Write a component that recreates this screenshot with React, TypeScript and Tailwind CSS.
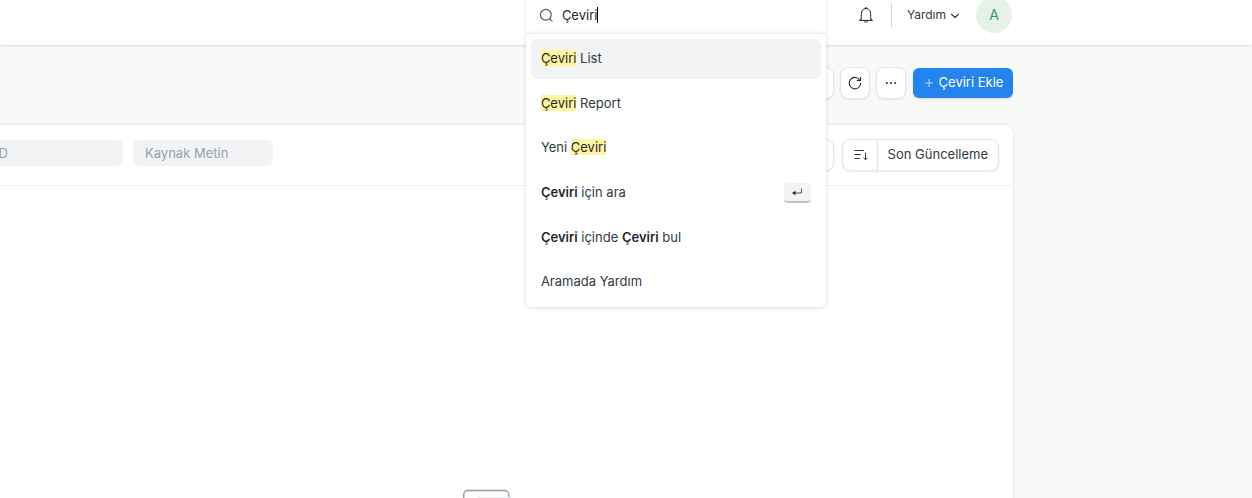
import React, { useState } from "react";

const FONT = "font-['Inter','Liberation_Sans',sans-serif]";
const BUTTON =
  "flex h-8 items-center justify-center border border-[#e3e6e8] bg-white shadow-[0_1px_2px_rgba(25,39,52,0.08)]";

function Mark({ children }: { children: React.ReactNode }) {
  return <mark className="bg-[#fff59d] text-[#1f272e]">{children}</mark>;
}

function ReturnKey() {
  return (
    <kbd className="flex h-5 w-[27px] items-center justify-center rounded-[4px] border-b-2 border-[#c0c6cc] bg-[#f1f3f5]">
      <svg width="12" height="10" viewBox="0 0 12 10" fill="none" aria-hidden="true">
        <path d="M10.5 1.5v4.5H2" stroke="#4c5a67" />
        <path d="M4.5 3.7 1 6l3.5 2.3z" fill="#1f272e" />
      </svg>
    </kbd>
  );
}

const results: { key: string; label: React.ReactNode; enter?: boolean }[] = [
  { key: "list", label: <><Mark>Çeviri</Mark> List</> },
  { key: "report", label: <><Mark>Çeviri</Mark> Report</> },
  { key: "new", label: <>Yeni <Mark>Çeviri</Mark></> },
  { key: "search", label: <><b>Çeviri</b> için ara</>, enter: true },
  { key: "find", label: <><b>Çeviri</b> içinde <b>Çeviri</b> bul</> },
  { key: "help", label: "Aramada Yardım" },
];

function Search() {
  const [query, setQuery] = useState("Çeviri");
  return (
    <div className="relative z-10 w-[300px]">
      <label className="relative flex h-9 items-center gap-2 bg-white pl-[13px] shadow-[0_0_3px_rgba(25,39,52,0.18)]">
        <svg width="15" height="15" viewBox="0 0 15 15" fill="none" stroke="#4c5a67" strokeWidth="1.2" strokeLinecap="round" aria-hidden="true">
          <circle cx="6.8" cy="6.8" r="5.4" />
          <path d="m10.8 10.8 2.3 2.3" />
        </svg>
        <span className="relative flex h-5 flex-1 items-center">
          <input
            aria-label="Ara"
            className="w-full bg-transparent text-[13px] leading-5 text-[#1f272e] outline-none caret-transparent"
            value={query}
            onChange={(e) => setQuery(e.target.value)}
          />
          <span aria-hidden="true" className="pointer-events-none absolute left-0 flex">
            <span className="invisible text-[13px] leading-5">{query}</span>
            <span className="my-0.5 w-px bg-black" />
          </span>
        </span>
      </label>
      <ul className="absolute top-9 left-0 flex h-[274px] w-full flex-col justify-between rounded-b-md border-t border-[#ebeef0] bg-white p-[5px] shadow-[0_1px_4px_rgba(25,39,52,0.16)]">
        {results.map((r, i) => (
          <li key={r.key}>
            <a
              href="#"
              className={`flex h-10 items-center justify-between rounded-md px-2.5 text-[13px] text-[#313b44] ${i === 0 ? "bg-[#f1f3f5]" : ""}`}
            >
              <span className="[&>b]:font-semibold [&>b]:text-[#1f272e]">{r.label}</span>
              {r.enter && <ReturnKey />}
            </a>
          </li>
        ))}
      </ul>
    </div>
  );
}

function Header() {
  return (
    <header className="relative z-10 -mt-[15px] flex h-[60px] shrink-0 items-center justify-end bg-white pr-[240px] shadow-[0_1px_2px_rgba(25,39,52,0.14)]">
      <Search />
      <button aria-label="Bildirimler" className="ml-8">
        <svg width="16" height="18" viewBox="0 0 16 18" fill="none" stroke="#1f272e" strokeLinejoin="round" aria-hidden="true">
          <path d="M1.4 14.4h13.2M3 14.4c.3-1.4.3-3.2.3-5.8C3.3 4.7 5 2.5 8 2.5s4.7 2.2 4.7 6.1c0 2.600 0 4.400.3 5.800M6.300 14.600c.2 1.100.8 1.700 1.700 1.700s1.500-.6 1.700-1.700M7.200 2.500c0-.7.3-1 .8-1s.8.3.8 1M3 12.900l-1.500 1.500M13 12.900l1.500 1.500" />
        </svg>
      </button>
      <span className="ml-[17px] h-6 w-px bg-[#d1d8dd]" />
      <button className="ml-[15px] flex items-center gap-1 text-xs text-[#313b44]">
        Yardım
        <svg width="10" height="10" viewBox="0 0 10 10" fill="none" stroke="#313b44" strokeWidth="1.2" strokeLinecap="round" strokeLinejoin="round" aria-hidden="true">
          <path d="M1.500 4.300 5 7.500l3.500-3.200" />
        </svg>
      </button>
      <button aria-label="Hesap" className="ml-4 flex size-9 items-center justify-center rounded-full bg-[#e6f2e9] text-sm text-[#2f9d58]">
        A
      </button>
    </header>
  );
}

function Toolbar() {
  return (
    <div className="flex h-20 shrink-0 items-center justify-end gap-[7px] px-[239px] pb-1">
      <div className="flex gap-1.5">
        <button aria-label="Görünüm" className={`${BUTTON} w-[100px] rounded-lg`} />
        <button aria-label="Yenile" className={`${BUTTON} w-[30px] rounded-lg`}>
          <svg width="14" height="14" viewBox="0 0 14 14" fill="none" stroke="#1f272e" strokeWidth="1.1" strokeLinecap="round" strokeLinejoin="round" aria-hidden="true">
            <path d="M12.700 7.300A5.700 5.700 0 1 1 11.900 4.200" />
            <path d="M12.500 1.300v3.200H9.300" />
          </svg>
        </button>
        <button aria-label="Menü" className={`${BUTTON} w-[30px] rounded-lg`}>
          <svg width="12" height="4" viewBox="0 0 12 4" fill="#1f272e" aria-hidden="true">
            <circle cx="1.800" cy="2" r="1" />
            <circle cx="6" cy="2" r="1" />
            <circle cx="10.200" cy="2" r="1" />
          </svg>
        </button>
      </div>
      <button className="flex h-[30px] w-[100px] items-center justify-center gap-1.5 rounded-md bg-[#2484ee] pl-0.5 text-[13px] text-white shadow-[0_1px_2px_rgba(25,39,52,0.14)]">
        <svg width="8" height="8" viewBox="0 0 8 8" stroke="#b9d9fb" aria-hidden="true">
          <path d="M4 0v8M0 4h8" />
        </svg>
        Çeviri Ekle
      </button>
    </div>
  );
}

function FilterInput({ label }: { label: string }) {
  return (
    <input
      aria-label={label}
      placeholder={label}
      className="h-[26px] w-[140px] rounded-md bg-[#f1f3f5] px-3 text-[13px] outline-none placeholder:text-[#98a1a9]"
    />
  );
}

function ListCard() {
  return (
    <main className="mr-[239px] -ml-8 flex grow flex-col rounded-t-lg bg-white shadow-[0_0_3px_rgba(25,39,52,0.14)]">
      <div className="flex h-[61px] shrink-0 items-center justify-between border-b border-[#edf0f2] pr-3.5 pl-[15px]">
        <div className="flex gap-2.5 pb-1">
          <FilterInput label="ID" />
          <FilterInput label="Kaynak Metin" />
        </div>
        <div className="flex gap-2">
          <button aria-label="Filtre" className={`${BUTTON} w-[100px] rounded-lg`} />
          <div className="flex">
            <button aria-label="Sıralama yönü" className={`${BUTTON} w-9 rounded-l-lg pl-0.5`}>
              <svg width="14" height="12" viewBox="0 0 14 12" fill="none" stroke="#313b44" strokeLinecap="round" strokeLinejoin="round" aria-hidden="true">
                <path d="M.8 1.500h9M.8 5.500h5.700M.8 9.500h4.700M11.500 4v6.500M9.800 9l1.700 1.700L13.200 9" />
              </svg>
            </button>
            <button className={`${BUTTON} -ml-px rounded-r-lg px-2.5 text-[13px] text-[#313b44]`}>
              Son Güncelleme
            </button>
          </div>
        </div>
      </div>
      <div className="flex justify-center pt-[303px]">
        <svg width="60" height="60" viewBox="0 0 60 60" fill="none" aria-hidden="true">
          <rect x="2.700" y="1.500" width="45" height="52" rx="4" stroke="#8fa0ae" strokeWidth="1.500" />
          <rect x="15" y="8" width="38" height="48" rx="4" fill="#edf0f2" />
        </svg>
      </div>
    </main>
  );
}

export default function App() {
  return (
    <div className={`${FONT} flex h-screen flex-col overflow-hidden bg-[#f8f9f9]`}>
      <Header />
      <Toolbar />
      <ListCard />
    </div>
  );
}
